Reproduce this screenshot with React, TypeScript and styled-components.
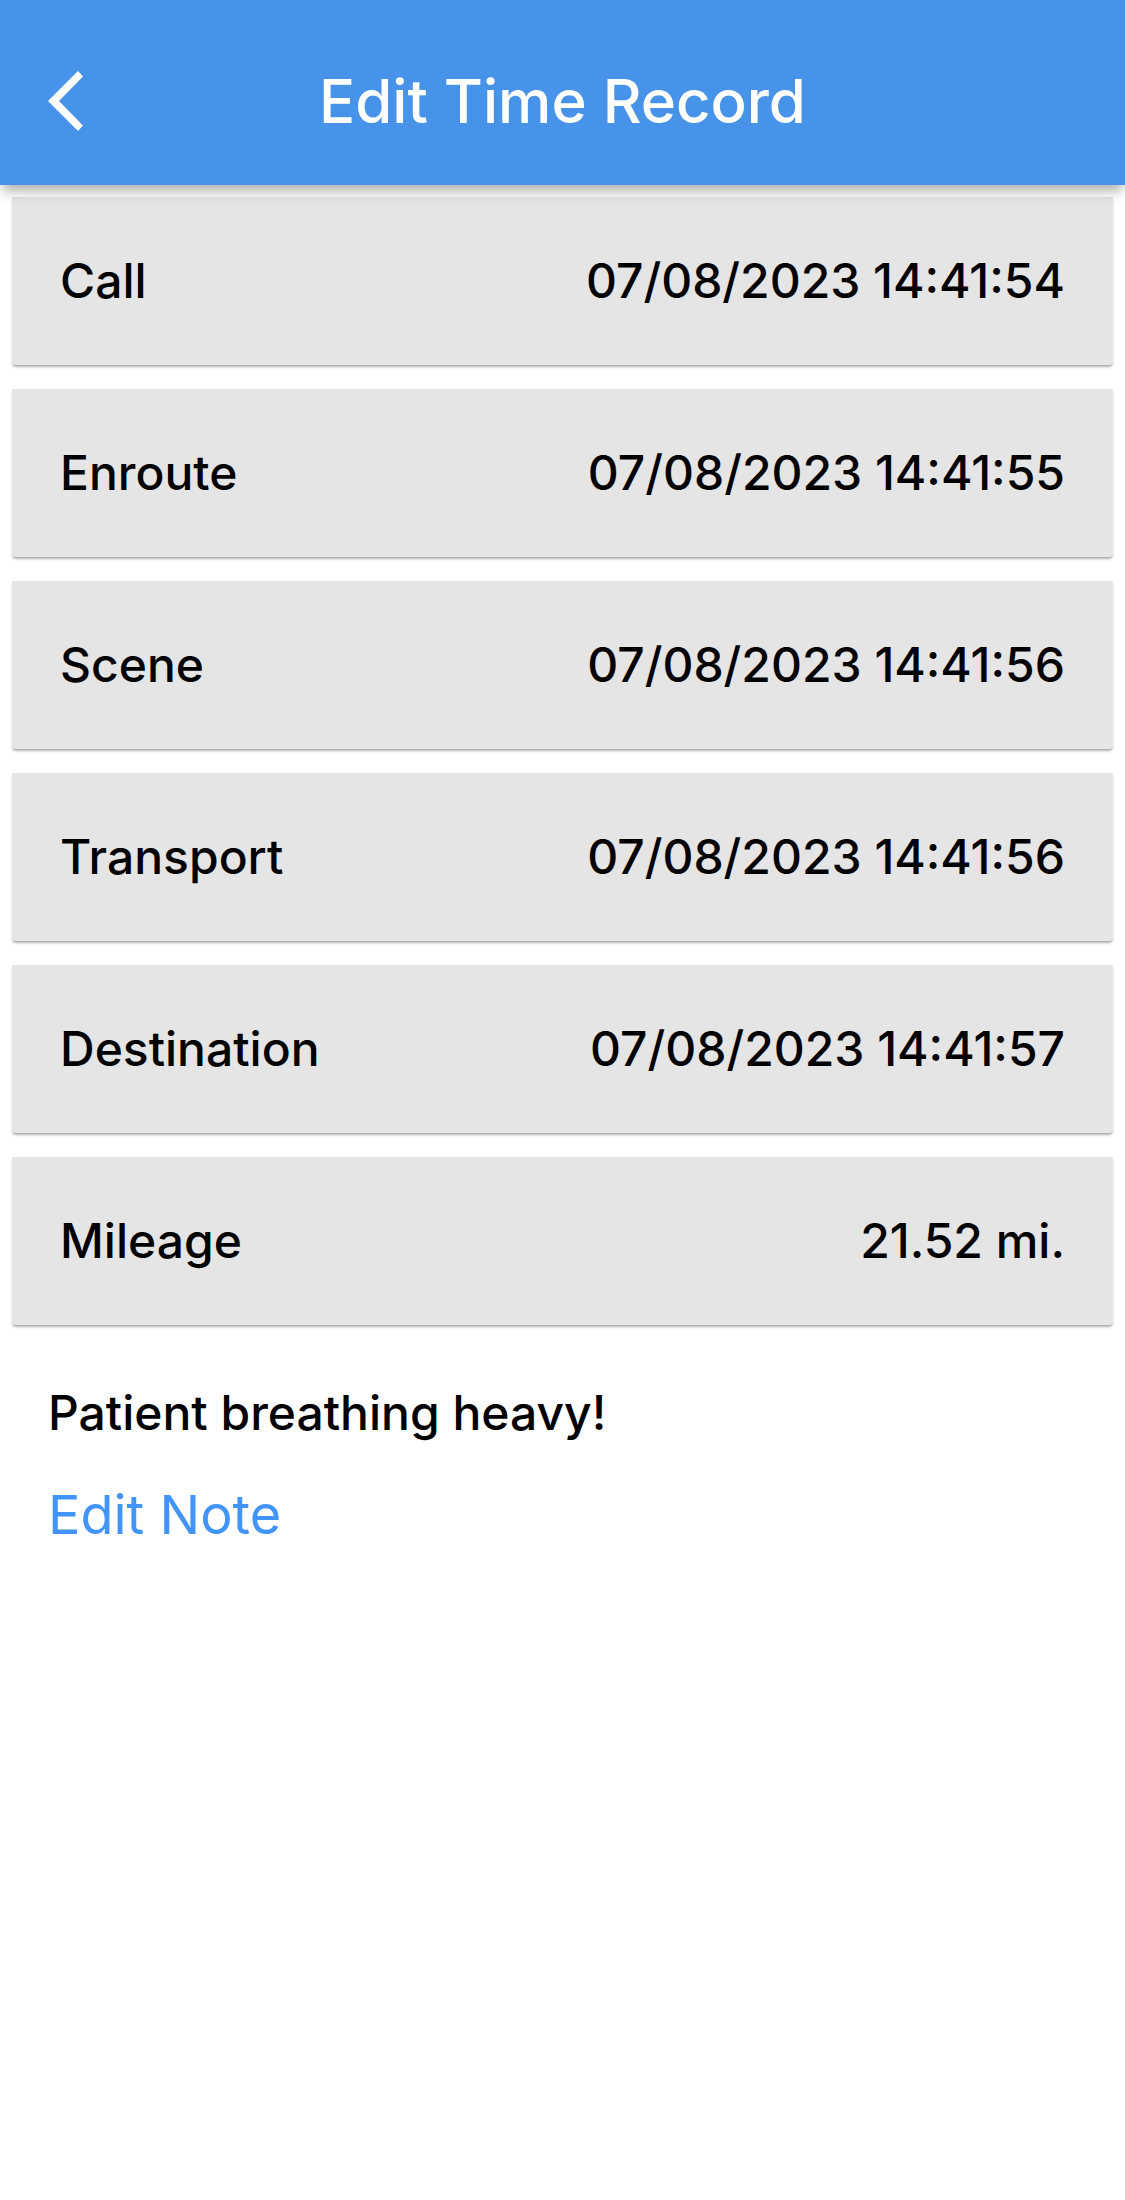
import React from "react";
import styled, { createGlobalStyle } from "styled-components";

const GlobalStyle = createGlobalStyle`
  *, *::before, *::after { box-sizing: border-box; }
  body {
    margin: 0;
    background: #ffffff;
    color: #000000;
    font-family: Inter, Roboto, "Liberation Sans", sans-serif;
  }
`;

const Header = styled.header`
  display: grid;
  grid-template-columns: 132px 1fr 132px;
  align-items: center;
  height: 185px;
  padding-top: 16px;
  background: #4893ea;
  color: #ffffff;
  box-shadow: 0 9px 12px -3px rgba(0, 0, 0, 0.32);
  position: relative;
  z-index: 1;
`;

const BackButton = styled.button`
  display: flex;
  align-items: center;
  height: 132px;
  padding: 0 0 0 48px;
  border: 0;
  background: none;
  color: inherit;
  cursor: pointer;
`;

const Title = styled.h1`
  margin: 0;
  font-size: 60px;
  line-height: 72px;
  font-weight: 500;
  text-align: center;
`;

const RecordList = styled.ul`
  display: flex;
  flex-direction: column;
  gap: 24px;
  margin: 0;
  padding: 12px;
  list-style: none;
`;

const RecordRow = styled.li`
  display: flex;
  align-items: center;
  justify-content: space-between;
  height: 168px;
  padding: 0 48px;
  border-radius: 0 0 4px 4px;
  background: #e5e5e5;
  box-shadow: 0 3px 3px -1px rgba(0, 0, 0, 0.3), 0 1px 2px rgba(0, 0, 0, 0.08);
  font-size: 48px;
  line-height: 60px;
  font-weight: 450;
`;

const NoteSection = styled.section`
  display: flex;
  flex-direction: column;
  align-items: flex-start;
  gap: 36px;
  padding: 46px 48px;
`;

const Note = styled.p`
  margin: 0;
  font-size: 48px;
  line-height: 60px;
  font-weight: 450;
`;

const EditButton = styled.button`
  padding: 0;
  border: 0;
  background: none;
  color: #4294f8;
  font-family: inherit;
  font-size: 54px;
  line-height: 72px;
  cursor: pointer;
`;

const records = [
  { label: "Call", value: "07/08/2023 14:41:54" },
  { label: "Enroute", value: "07/08/2023 14:41:55" },
  { label: "Scene", value: "07/08/2023 14:41:56" },
  { label: "Transport", value: "07/08/2023 14:41:56" },
  { label: "Destination", value: "07/08/2023 14:41:57" },
  { label: "Mileage", value: "21.52 mi." },
];

export default function App() {
  return (
    <>
      <GlobalStyle />
      <Header>
        <BackButton type="button" aria-label="Back">
          <svg width="35" height="60" viewBox="0 0 35 60" fill="currentColor" aria-hidden="true">
            <path d="M30 0 L35 5.5 L11 30 L35 54.5 L30 60 L0 30 Z" />
          </svg>
        </BackButton>
        <Title>Edit Time Record</Title>
      </Header>
      <main>
        <RecordList>
          {records.map((record) => (
            <RecordRow key={record.label}>
              <span>{record.label}</span>
              <span>{record.value}</span>
            </RecordRow>
          ))}
        </RecordList>
        <NoteSection>
          <Note>Patient breathing heavy!</Note>
          <EditButton type="button">Edit Note</EditButton>
        </NoteSection>
      </main>
    </>
  );
}
